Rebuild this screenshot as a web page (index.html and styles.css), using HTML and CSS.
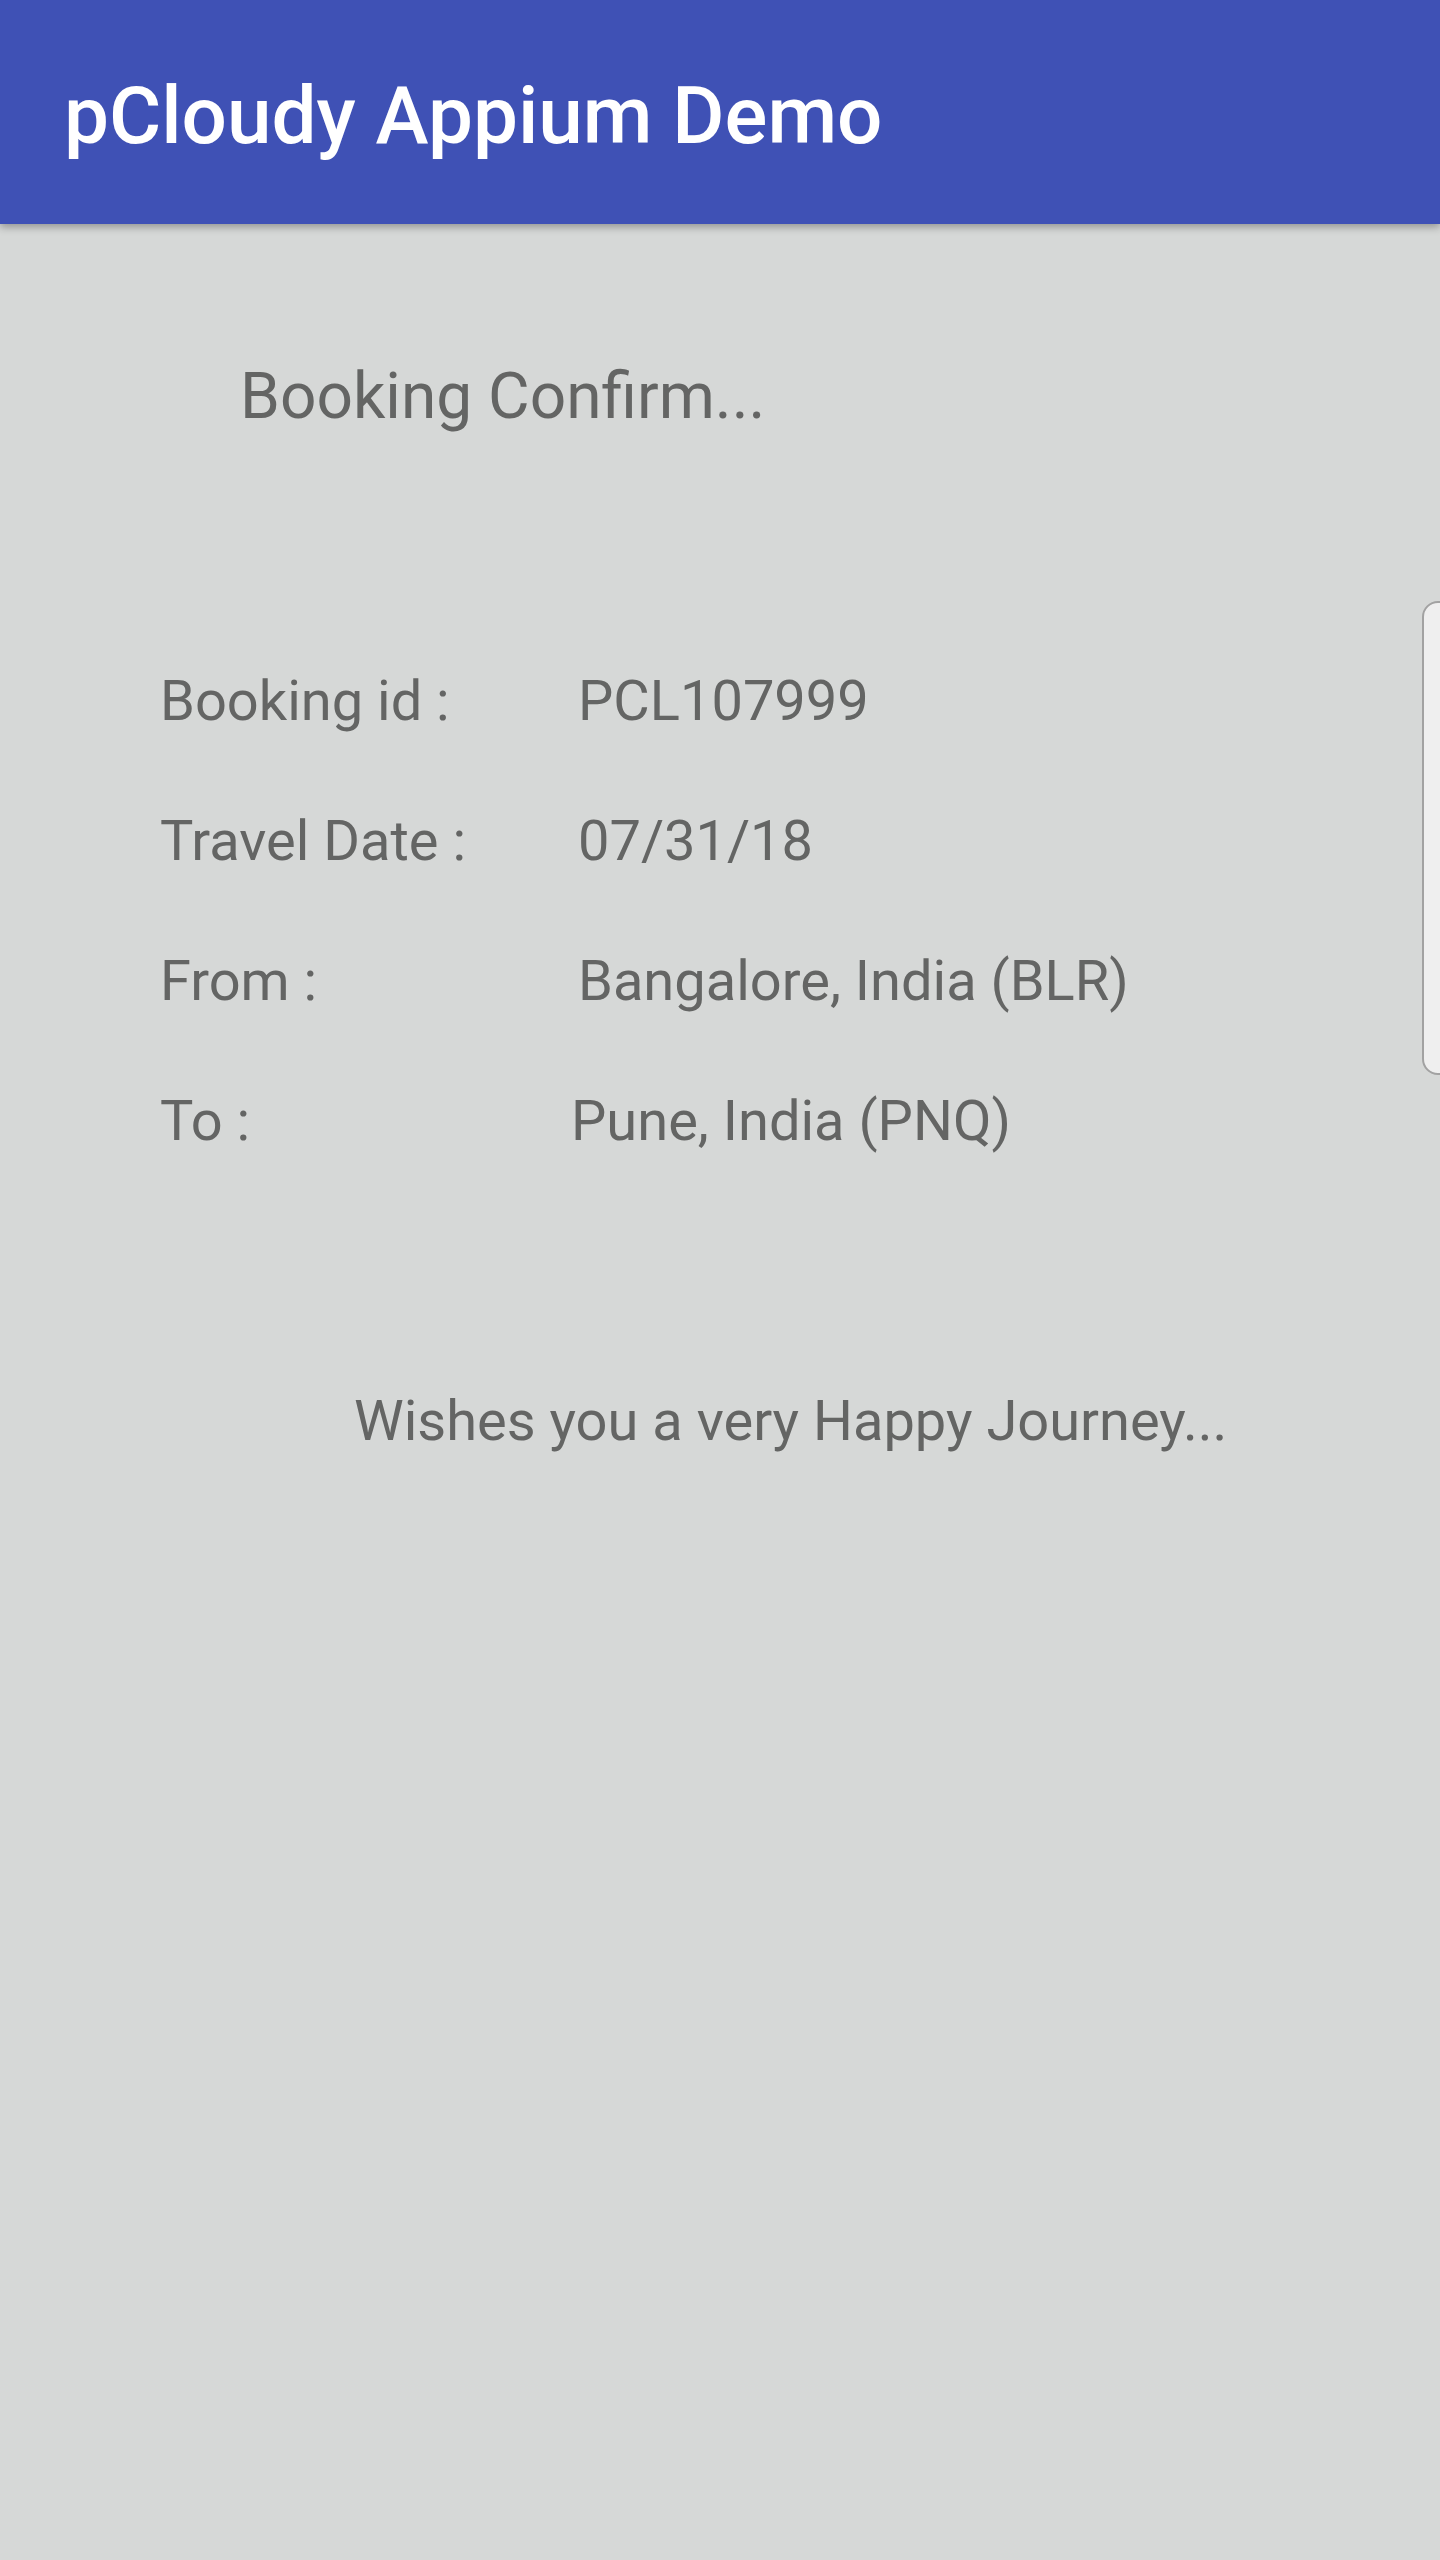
FILE: index.html
```html
<!DOCTYPE html>
<html>
<head>
<meta charset="utf-8">
<title>pCloudy Appium Demo</title>
<link rel="stylesheet" href="styles.css">
</head>
<body>
<div class="screen">
  <header class="toolbar">
    <h1 class="toolbar-title">pCloudy Appium Demo</h1>
  </header>
  <main class="content">
    <div class="heading">Booking Confirm...</div>
    <div class="details">
      <div class="row"><span class="label">Booking id :</span><span class="value">PCL107999</span></div>
      <div class="row"><span class="label">Travel Date :</span><span class="value">07/31/18</span></div>
      <div class="row"><span class="label">From :</span><span class="value">Bangalore, India (BLR)</span></div>
      <div class="row"><span class="label">To :</span><span class="value value-shift">Pune, India (PNQ)</span></div>
    </div>
    <div class="wishes">Wishes you a very Happy Journey...</div>
  </main>
  <div class="edge-handle"></div>
</div>
</body>
</html>
```

FILE: styles.css
```css
html, body {
  margin: 0;
  padding: 0;
}
body {
  background: #d6d8d7;
  font-family: Roboto, "Noto Sans", "Liberation Sans", sans-serif;
  color: #646564;
  overflow: hidden;
}
.screen {
  position: relative;
  width: 1440px;
  height: 2560px;
  overflow: hidden;
  background: #d6d8d7;
}
.toolbar {
  height: 224px;
  box-sizing: border-box;
  padding: 8px 64px 0 64px;
  background: #3f51b5;
  display: flex;
  align-items: center;
  box-shadow: 0 3px 8px rgba(0, 0, 0, 0.32);
  position: relative;
  z-index: 1;
}
.toolbar-title {
  margin: 0;
  font-size: 80px;
  font-weight: 500;
  color: #ffffff;
  line-height: normal;
}
.content {
  display: flex;
  flex-direction: column;
}
.heading {
  margin-top: 123px;
  margin-left: 240px;
  font-size: 64px;
  line-height: 100px;
}
.details {
  margin-top: 184px;
  margin-left: 160px;
  display: flex;
  flex-direction: column;
}
.row {
  display: flex;
  font-size: 56px;
  line-height: 140px;
}
.label {
  width: 418px;
  flex: none;
}
.value-shift {
  margin-left: -7px;
}
.wishes {
  margin-top: 160px;
  margin-left: 354px;
  font-size: 56px;
  line-height: 140px;
}
.edge-handle {
  position: absolute;
  top: 601px;
  right: -24px;
  width: 42px;
  height: 474px;
  box-sizing: border-box;
  border: 2px solid #a2a2a2;
  border-radius: 16px;
  background: #efefef;
}
```
